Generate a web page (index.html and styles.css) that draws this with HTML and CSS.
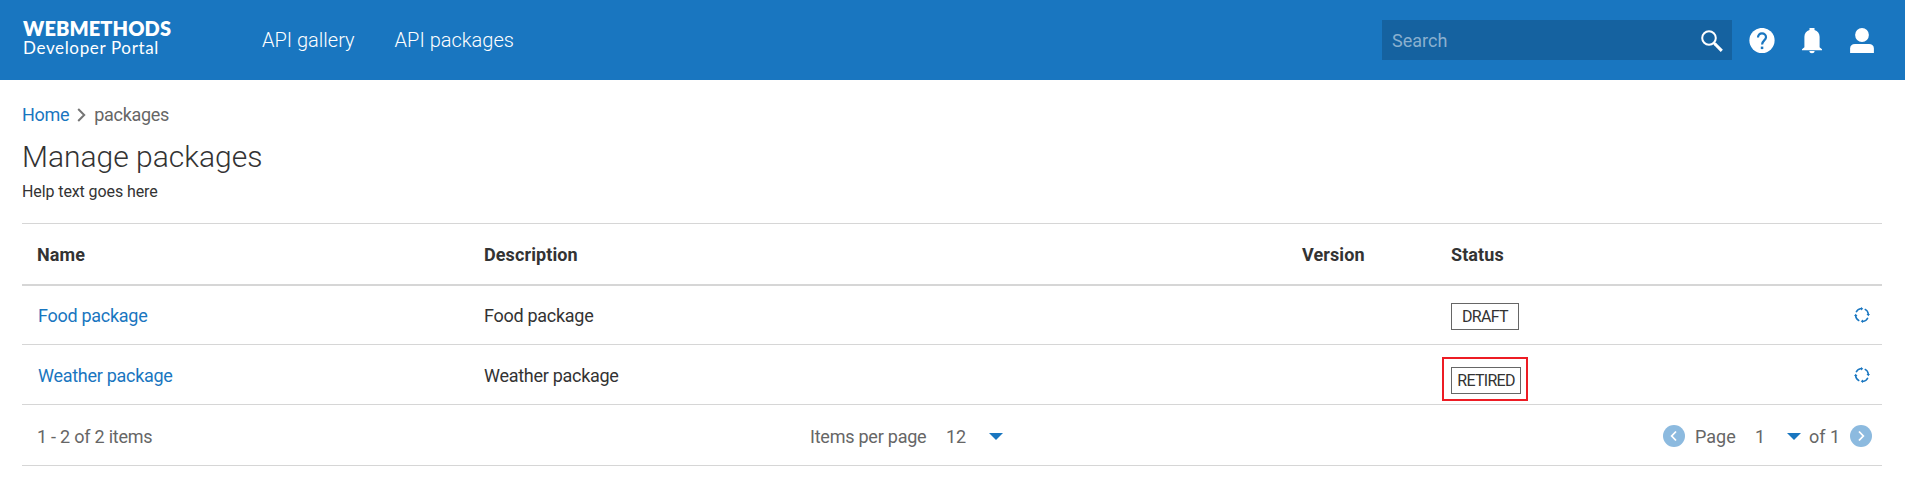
FILE: index.html
```html
<!DOCTYPE html>
<html lang="en">
<head>
<meta charset="utf-8">
<title>Manage packages</title>
<link rel="stylesheet" href="styles.css">
</head>
<body>
<header class="topbar">
  <div class="brand"><div class="brand-name">WEBMETHODS</div><div class="brand-sub">Developer Portal</div></div>
  <nav class="nav"><a class="nav-gallery">API gallery</a><a class="nav-packages">API packages</a></nav>
  <div class="search">
    <span>Search</span>
    <svg width="22" height="22" viewBox="0 0 22 22" fill="none" stroke="#fff"><circle cx="8" cy="8" r="6.8" stroke-width="2"/><path d="M13 13l1.5 1.5" stroke-width="2.6"/><path d="M14 14l6.8 6.8" stroke-width="3.1"/></svg>
  </div>
  <div class="actions">
    <svg width="26" height="26" viewBox="0 0 26 26"><circle cx="13" cy="12.5" r="12.6" fill="#fff"/><path d="M9 9.600c0-2.600 1.700-4.200 4-4.200s4 1.600 4 3.800c0 3.100-3.900 3.400-3.900 7.300" fill="none" stroke="#1976c0" stroke-width="2.200"/><path d="M11.800 18.600h2.500v2.500h-2.500z" fill="#1976c0"/></svg>
    <svg width="20" height="26" viewBox="0 0 20 26" fill="#fff"><path d="M7.500 0h5v1.900c3.200.8 5.100 3.500 5.100 6.900v10.400l2.400 2.100v.9H0v-.9l2.400-2.100V8.800c0-3.400 1.900-6.100 5.100-6.900zM7.400 23h5.200c0 1.300-1.100 2.300-2.600 2.300S7.400 24.300 7.400 23z"/></svg>
    <svg width="24" height="26" viewBox="0 0 24 26" fill="#fff"><circle cx="12" cy="7" r="6.900"/><path d="M.1 25v-4.500C.1 17.500 2 16 5 16h14c3 0 4.900 1.500 4.900 4.500V25z"/></svg>
  </div>
</header>
<main class="page">
  <div class="crumbs"><a>Home</a><svg width="9" height="14" viewBox="0 0 9 14"><path d="M1.200 1l6 6-6 6" fill="none" stroke="#757575" stroke-width="2"/></svg><span>packages</span></div>
  <h1>Manage packages</h1>
  <p class="help">Help text goes here</p>
  <section class="table">
    <div class="row head"><span>Name</span><span>Description</span><span>Version</span><span>Status</span><span></span></div>
    <div class="row first">
      <a>Food package</a><span>Food package</span><span></span><span class="status"><b class="tag draft">DRAFT</b></span>
      <svg class="cycle" width="16" height="16" viewBox="0 0 16 16"><g id="arcs" fill="none" stroke="#1976c0" stroke-width="1.500"><path d="M2.100 5.300A6.500 6.500 0 0 1 7.300 1.600M10.700 2.100A6.500 6.500 0 0 1 14.400 7.300M13.900 10.700A6.500 6.500 0 0 1 8.700 14.400M5.300 13.900A6.500 6.500 0 0 1 1.600 8.700"/></g><path id="tips" fill="#1976c0" d="M7 0l2.300 1.700L7 3.500zM16 7l-1.700 2.300L12.500 7zM9 16l-2.300-1.700L9 12.500zM0 9l1.700-2.300L3.500 9z"/></svg>
    </div>
    <div class="row">
      <a>Weather package</a><span>Weather package</span><span></span><span class="status"><span class="highlight"><b class="tag retired">RETIRED</b></span></span>
      <svg class="cycle" width="16" height="16" viewBox="0 0 16 16"><use href="#arcs"/><use href="#tips"/></svg>
    </div>
    <footer class="pager">
      <span class="count">1 - 2 of 2 items</span>
      <div class="per-page"><span>Items per page</span><span>12</span><i class="caret"></i></div>
      <div class="pages">
        <svg width="22" height="22" viewBox="0 0 22 22"><circle cx="11" cy="11" r="11" fill="#8cbadf"/><path d="M13 6.500L8.700 11l4.300 4.500" fill="none" stroke="#fff" stroke-width="1.800"/></svg>
        <span class="page-label">Page</span><span class="page-number">1</span><i class="caret"></i><span class="page-total">of 1</span>
        <svg width="22" height="22" viewBox="0 0 22 22"><circle cx="11" cy="11" r="11" fill="#8cbadf"/><path d="M9 6.500l4.300 4.500L9 15.500" fill="none" stroke="#fff" stroke-width="1.800"/></svg>
      </div>
    </footer>
  </section>
</main>
</body>
</html>
```
FILE: styles.css
```css
* { box-sizing: border-box; }
body { margin: 0; background: #fff; color: #333; font: 18px/24px Roboto, sans-serif; overflow: hidden; }
svg { display: block; flex: none; }
.topbar { height: 80px; background: #1976c0; color: #fff; display: flex; align-items: center; padding-left: 23px; }
.brand { width: 239px; font-family: Lato, sans-serif; padding-bottom: 5px; white-space: nowrap; }
.brand-name { font-size: 20px; font-weight: 800; line-height: 20px; letter-spacing: .1px; }
.brand-sub { font-size: 17px; line-height: 19px; letter-spacing: .65px; }
.nav { display: flex; gap: 40px; font-size: 20px; font-weight: 300; }
.search { margin-left: auto; width: 350px; height: 40px; background: #1562a0; display: flex; align-items: center; justify-content: space-between; padding: 1px 9px 0 10px; color: #8ab0cf; }
.actions { display: flex; gap: 27px; padding: 2px 0 0 17px; width: 173px; }
.actions svg:last-child { margin-left: 1px; }
.page { padding: 22px 23px 0 22px; }
.crumbs { display: flex; align-items: center; height: 26px; color: #666; letter-spacing: -.3px; }
.crumbs svg { margin: 0 8px 0 8px; }
a { color: #1976c0; }
.nav a { color: #fff; }
h1 { margin: 11px 0 0; font-size: 30px; line-height: 36px; font-weight: 300; }
.help { margin: 5px 0 0; font-size: 16px; line-height: 23px; letter-spacing: -.1px; }
.table { margin-top: 20px; border-top: 1px solid #d6d6d6; letter-spacing: -.28px; }
.row { display: grid; grid-template-columns: 446px 818px 149px 1fr 16px; height: 60px; padding: 0 12px 0 16px; align-items: center; border-bottom: 1px solid #d6d6d6; }
.row.first { height: 59px; }
.row > a, .row > span { margin-top: 2px; }
.row.head { height: 62px; font-weight: 700; border-bottom-width: 2px; padding: 0 12px 1px 15px; grid-template-columns: 447px 818px 149px 1fr 16px; letter-spacing: .1px; }
.status { display: flex; align-items: center; }
.tag { height: 27px; border: 1px solid #666; font-size: 16px; font-weight: 400; line-height: 25px; text-align: center; letter-spacing: -.7px; }
.draft { width: 68px; margin-top: 1px; }
.retired { width: 70px; }
.highlight { display: block; border: 2px solid #ed1c24; padding: 8px 5px 5px 7px; width: 86px; height: 44px; margin: 7px 0 0 -9px; }
.highlight .tag { display: block; }
.row:not(.first) .cycle { margin-top: 1px; }
.pager { height: 61px; border-bottom: 1px solid #d6d6d6; display: grid; grid-template-columns: 773px 1fr auto; align-items: center; padding: 3px 10px 0 15px; color: #666; letter-spacing: -.23px; }
.per-page, .pages { display: flex; align-items: center; }
.per-page span:first-child { width: 136px; }
.per-page span:nth-child(2) { width: 43px; letter-spacing: 0; }
.caret { width: 0; height: 0; border: 7px solid transparent; border-top-color: #1976c0; border-bottom: 0; }
.pages { letter-spacing: 0; }
.pages svg { margin-bottom: 1px; }
.page-label { width: 60px; margin-left: 10px; }
.page-number { width: 32px; }
.page-total { width: 35px; margin-left: 8px; margin-right: 6px; }
```
